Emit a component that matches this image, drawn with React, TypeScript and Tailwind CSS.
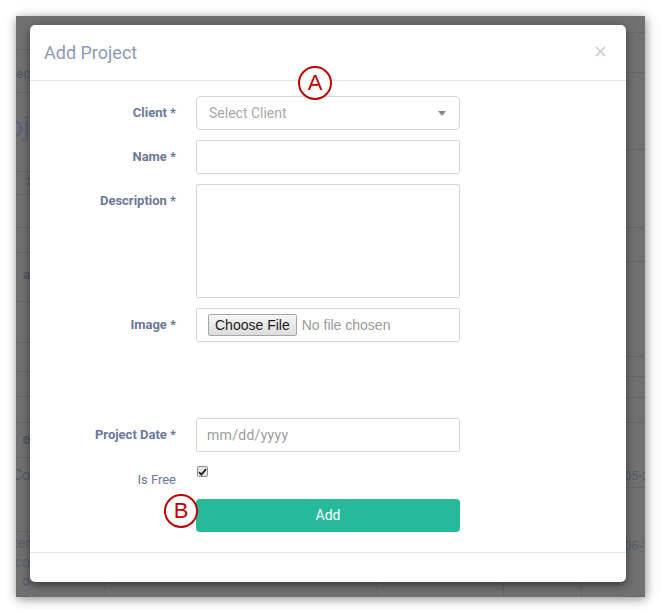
import React from "react";

const leftRows = [
  { h: 34, t: "" },
  { h: 43, t: "ec", cls: "text-[13px] pt-[17px]" },
  { h: 79, t: "oj", cls: "text-[28px] pt-[20px] text-[#59637a]" },
  { h: 23, t: ":", cls: "text-[13px] pt-[2px] font-bold" },
  { h: 33, t: "" },
  { h: 25, t: "" },
  { h: 49, t: "a", cls: "text-[13px] pt-[15px] font-bold" },
  { h: 41, t: "" },
  { h: 29, t: "" },
  { h: 25, t: "" },
  { h: 26, t: "" },
  { h: 35, t: "e", cls: "text-[14px] pt-[9px] font-bold" },
  { h: 74, t: "Co", cls: "text-[14px] pt-[10px]" },
  { h: 65, t: "", multi: ["ter", "tco", "o"] },
];

const rightRows = [
  { h: 17, t: "" },
  { h: 40, t: "" },
  { h: 77, t: "" },
  { h: 78, t: "" },
  { h: 34, t: "" },
  { h: 95, t: "" },
  { h: 20, t: "" },
  { h: 21, t: "" },
  { h: 25, t: "" },
  { h: 65, t: "05-2", cls: "pt-[46px]" },
  { h: 109, t: "06-1", cls: "pt-[51px]" },
];

function Label({ text, className = "" }: { text: string; className?: string }) {
  return (
    <div
      className={
        "w-[146px] flex justify-end items-center text-[13px] font-bold text-[#6b7899] " + className
      }
    >
      {text}
    </div>
  );
}

function Mark({ letter, className }: { letter: string; className: string }) {
  return (
    <div
      className={
        "absolute w-[34px] h-[34px] rounded-full border-2 border-[#c00000] bg-white flex items-center justify-center text-[22px] leading-none text-[#c00000] " +
        className
      }
      style={{ fontFamily: "'Liberation Sans', Arial, sans-serif" }}
    >
      {letter}
    </div>
  );
}

export default function App() {
  return (
    <div className="w-[661px] h-[613px] bg-white pt-[16px] pl-[16px]">
      <div
        className="w-[629px] h-[581px] bg-[#707070] flex overflow-hidden shadow-[1px_2px_10px_rgba(0,0,0,0.45)]"
        style={{ fontFamily: "Roboto, 'Liberation Sans', sans-serif" }}
      >
        {/* left strip of the page behind */}
        <div className="w-[14px] flex flex-col">
          {leftRows.map((r, i) => (
            <div
              key={i}
              className="flex justify-end overflow-hidden border-b border-[#666] text-[#4e5666]"
              style={{ height: r.h }}
            >
              {r.multi ? (
                <div className="flex flex-col items-end text-[14px] leading-[19px] pt-[2px] text-[#585f6c]">
                  {r.multi.map((m) => (
                    <span key={m} className="whitespace-nowrap">
                      {m}
                    </span>
                  ))}
                </div>
              ) : (
                <span className={"whitespace-nowrap leading-none " + (r.cls ?? "")}>{r.t}</span>
              )}
            </div>
          ))}
        </div>

        {/* modal column */}
        <div className="w-[596px] flex flex-col">
          <div className="h-[9px]" />
          <div className="relative w-[596px] h-[557px] bg-white rounded-[5px] shadow-[0_3px_9px_rgba(0,0,0,0.5)] flex flex-col">
            <div className="h-[56px] border-b border-[#e5e5e5] flex items-center justify-between pl-[14px] pr-[20px]">
              <h4 className="text-[18px] text-[#8c9ab6]">Add Project</h4>
              <svg width="11" height="11" viewBox="0 0 11 11" className="mb-[3px]">
                <path d="M1 1L10 10M10 1L1 10" stroke="#cacaca" strokeWidth="1.6" />
              </svg>
            </div>

            <div className="pt-[15px] flex flex-col">
              <div className="flex gap-[20px]">
                <Label text="Client *" className="h-[34px]" />
                <div className="w-[264px] h-[34px] border border-[#d6d6d6] rounded-[4px] flex items-center justify-between pl-[12px] pr-[13px]">
                  <span className="text-[14px] text-[#a9a9a9]">Select Client</span>
                  <svg width="8" height="5" viewBox="0 0 8 5">
                    <path d="M0 0H8L4 5Z" fill="#888" />
                  </svg>
                </div>
              </div>

              <div className="flex gap-[20px] mt-[10px]">
                <Label text="Name *" className="h-[34px]" />
                <div className="w-[264px] h-[34px] border border-[#d6d6d6] rounded-[2px]" />
              </div>

              <div className="flex gap-[20px] mt-[10px] items-start">
                <Label text="Description *" className="h-[34px]" />
                <div className="w-[264px] h-[114px] border border-[#d6d6d6] rounded-[2px]" />
              </div>

              <div className="flex gap-[20px] mt-[10px]">
                <Label text="Image *" className="h-[34px]" />
                <div
                  className="w-[264px] h-[34px] border border-[#d6d6d6] rounded-[2px] flex items-center pl-[11px]"
                  style={{ fontFamily: "'Liberation Sans', Arial, sans-serif" }}
                >
                  <span className="h-[22px] px-[6px] flex items-center text-[14px] text-[#1a1a1a] border border-[#a6a6a6] rounded-[2px] bg-gradient-to-b from-[#f7f7f7] to-[#dcdcdc]">
                    Choose File
                  </span>
                  <span className="ml-[5px] text-[14px] text-[#9a9a9a]">No file chosen</span>
                </div>
              </div>

              <div className="flex gap-[20px] mt-[76px]">
                <Label text="Project Date *" className="h-[34px]" />
                <div className="w-[264px] h-[34px] border border-[#d6d6d6] rounded-[2px] flex items-center pl-[10px]">
                  <span className="text-[14px] text-[#9d9d9d] tracking-[0.3px]">mm/dd/yyyy</span>
                </div>
              </div>

              <div className="flex gap-[20px] mt-[10px]">
                <Label text="Is Free" className="h-[34px] font-normal text-[#6b7899] pt-[1px]" />
                <div className="w-[264px] pt-[4px] pl-[1px]">
                  <div className="w-[11px] h-[11px] rounded-[2px] border border-[#8f8f8f] bg-[#e6e6e6] flex items-center justify-center">
                    <svg width="9" height="8" viewBox="0 0 9 8">
                      <path d="M1 4.2L3.4 6.6L8 1.2" stroke="#222" strokeWidth="1.8" fill="none" />
                    </svg>
                  </div>
                </div>
              </div>

              <div className="flex mt-[3px] pl-[166px]">
                <button className="w-[264px] h-[33px] rounded-[4px] bg-[#26b99a] text-white text-[14px]">
                  Add
                </button>
              </div>
            </div>

            <div className="mt-auto h-[30px] border-t border-[#e5e5e5]" />

            <Mark letter="A" className="left-[268px] top-[41px]" />
            <Mark letter="B" className="left-[134px] top-[469px]" />
          </div>
          {/* bottom strip of the page behind */}
          <div className="flex-1 flex">
            <div className="w-[76px] border-r border-[#666]" />
            <div className="w-[272px] border-r border-[#666]" />
            <div className="w-[126px] border-r border-[#666]" />
            <div className="w-[78px] border-r border-[#666]" />
            <div className="flex-1" />
          </div>
        </div>

        {/* right strip of the page behind */}
        <div className="flex-1 flex flex-col overflow-hidden">
          {rightRows.map((r, i) => (
            <div
              key={i}
              className="overflow-hidden border-b border-[#666] text-[#555c68] text-[13px] leading-none"
              style={{ height: r.h }}
            >
              <span className={"block whitespace-nowrap -ml-[2px] " + (r.cls ?? "")}>{r.t}</span>
            </div>
          ))}
        </div>
      </div>
    </div>
  );
}
